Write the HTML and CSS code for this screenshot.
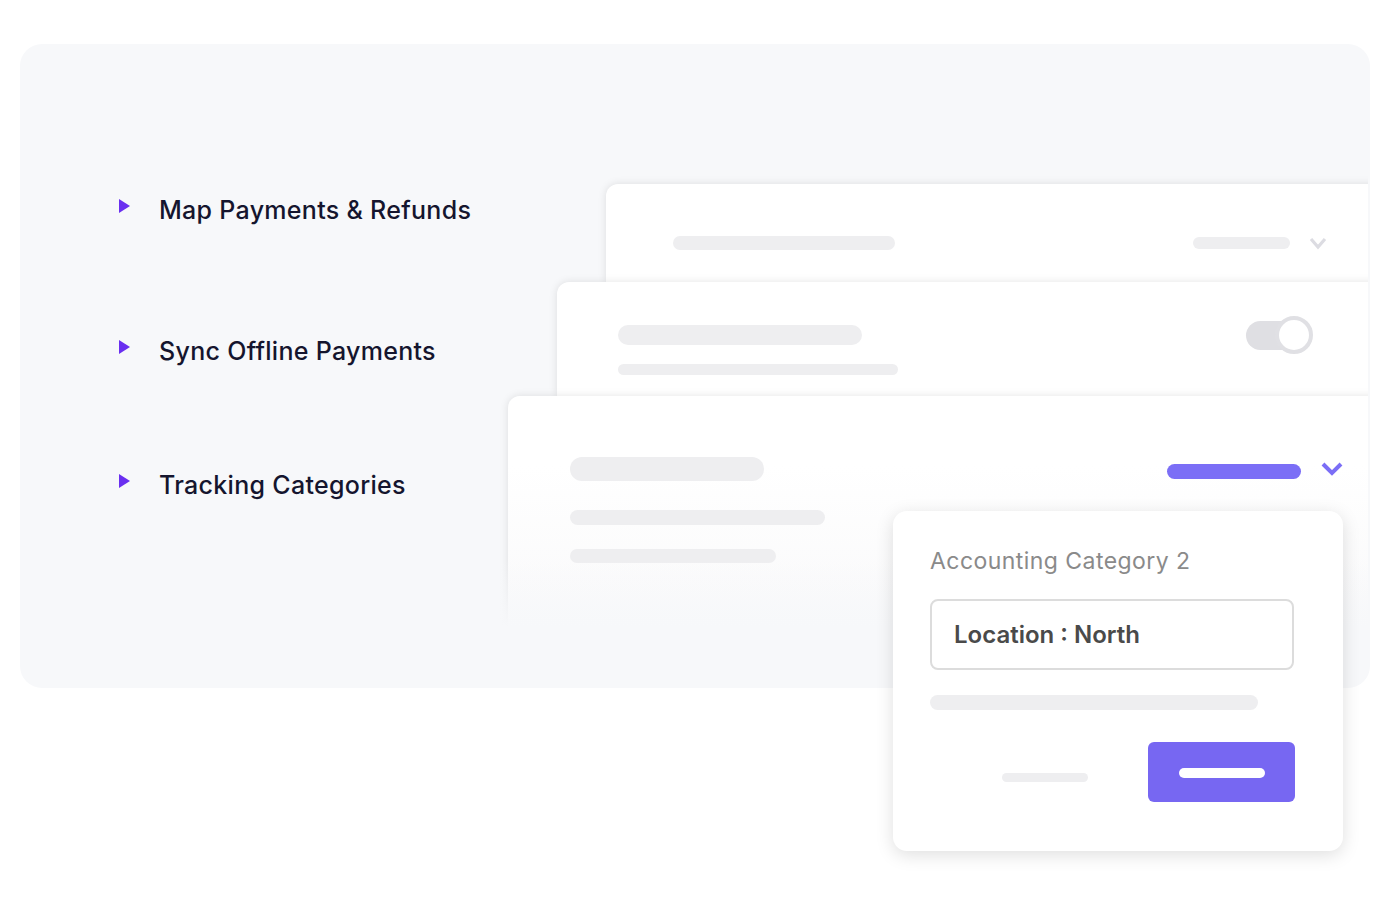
FILE: index.html
```html
<!DOCTYPE html>
<html lang="en">
<head>
  <meta charset="UTF-8">
  <meta name="viewport" content="width=device-width, initial-scale=1.0">
  <title>Accounting Sync</title>
  <link rel="stylesheet" href="styles.css">
</head>
<body>

<div class="page">
  <div class="panel">
    <ul class="features">
      <li class="feature feature-map"><span class="arrow"></span>Map Payments &amp; Refunds</li>
      <li class="feature feature-sync"><span class="arrow"></span>Sync Offline Payments</li>
      <li class="feature feature-track"><span class="arrow"></span>Tracking Categories</li>
    </ul>

    <div class="stack">
      <div class="stack-clip">
        <div class="card card-one">
          <div class="row">
            <span class="bar bar-a"></span>
            <div class="row-end">
              <span class="bar bar-b"></span>
              <svg class="chevron" width="18" height="14" viewBox="0 0 18 14">
                <polyline points="2,3 9,11 16,3" fill="none" stroke="#dcdce2" stroke-width="3.2"/>
              </svg>
            </div>
          </div>
        </div>

        <div class="card card-two">
          <div class="row row-top">
            <div class="lines">
              <span class="bar bar-c"></span>
              <span class="bar bar-d"></span>
            </div>
            <div class="toggle">
              <span class="track"></span>
              <span class="knob"></span>
            </div>
          </div>
        </div>

        <div class="card card-three">
          <div class="row">
            <span class="bar bar-e"></span>
            <div class="row-end">
              <span class="bar bar-purple"></span>
              <svg class="chevron" width="24" height="16" viewBox="0 0 24 16">
                <polyline points="3,3 12,12 21,3" fill="none" stroke="#7b6ef6" stroke-width="4"/>
              </svg>
            </div>
          </div>
          <span class="bar bar-f"></span>
          <span class="bar bar-g"></span>
        </div>
      </div>

      <div class="popup">
        <div class="popup-label">Accounting Category 2</div>
        <div class="popup-input">Location : North</div>
        <span class="bar bar-h"></span>
        <div class="popup-actions">
          <span class="bar bar-i"></span>
          <div class="popup-button"><span class="button-line"></span></div>
        </div>
      </div>
    </div>
  </div>
</div>

</body>
</html>
```

FILE: styles.css
```css
body {
  margin: 0;
  background-color: #fff;
  font-family: Inter, "Noto Sans", sans-serif;
}

.page {
  height: 904px;
  padding: 44px 0 0 20px;
  box-sizing: border-box;
}

.panel {
  display: flex;
  width: 1350px;
  height: 644px;
  background-color: #f7f8fa;
  border-radius: 22px;
}

/* left list */
.features {
  width: 468px;
  margin: 0;
  padding: 0 0 0 99px;
  box-sizing: border-box;
  list-style: none;
}

.feature {
  display: flex;
  align-items: center;
  height: 32px;
  font-size: 25px;
  font-weight: 500;
  color: #15152e;
  letter-spacing: 0.3px;
}

.feature-map { margin-top: 150px; }
.feature-sync { margin-top: 109px; }
.feature-track { margin-top: 102px; }

.arrow {
  width: 0;
  height: 0;
  margin-right: 29px;
  border-top: 7px solid transparent;
  border-bottom: 7px solid transparent;
  border-left: 11px solid #6a2ff0;
  position: relative;
  top: -4px;
}

/* right side stack */
.stack {
  position: relative;
  flex: 1;
  margin-right: 2px;
}

.stack-clip {
  height: 100%;
  padding: 140px 0 0 20px;
  box-sizing: border-box;
  overflow: hidden;
}

.card {
  margin-right: -20px;
  background-color: #fff;
  border-radius: 12px 0 0 0;
  box-shadow: 0 0 8px rgba(0, 0, 0, 0.11);
  box-sizing: border-box;
  position: relative;
}

.card-one {
  height: 98px;
  margin-left: 98px;
  padding: 52px 61px 0 67px;
}

.card-two {
  height: 114px;
  margin-left: 49px;
  padding: 43px 75px 0 61px;
}

.card-three {
  height: 232px;
  padding: 61px 44px 0 62px;
  background: linear-gradient(#fff 30%, #f9f9fa 100%);
}

/* fade the last card into the panel */
.card-three::after {
  content: "";
  position: absolute;
  left: -20px;
  right: 0;
  bottom: -12px;
  height: 80px;
  background: linear-gradient(rgba(247, 248, 250, 0), #f7f8fa 85%);
}

.row {
  display: flex;
  align-items: center;
  justify-content: space-between;
}

.row-top {
  align-items: flex-start;
}

.row-end {
  display: flex;
  align-items: center;
  gap: 19px;
}

.bar {
  display: block;
  background-color: #eeeef0;
  border-radius: 10px;
}

.bar-a { width: 222px; height: 14px; }
.bar-b { width: 97px; height: 12px; }
.bar-c { width: 244px; height: 20px; }
.bar-d { width: 280px; height: 11px; margin-top: 19px; }
.bar-e { width: 194px; height: 24px; border-radius: 12px; }
.bar-f { width: 255px; height: 15px; margin-top: 29px; }
.bar-g { width: 206px; height: 14px; margin-top: 24px; }
.bar-h { width: 328px; height: 15px; margin-top: 25px; }
.bar-i { width: 86px; height: 9px; }

.bar-purple {
  width: 134px;
  height: 15px;
  background-color: #7b6ef6;
  margin-top: 4px;
}

.chevron {
  display: block;
}

.toggle {
  display: flex;
  align-items: center;
  margin-top: -9px;
}

.track {
  width: 52px;
  height: 29px;
  border-radius: 15px;
  background-color: #dfdfe3;
}

.knob {
  width: 38px;
  height: 38px;
  margin-left: -23px;
  border: 4px solid #e0e0e4;
  border-radius: 50%;
  background-color: #fff;
  box-sizing: border-box;
}

/* popup */
.popup {
  position: absolute;
  left: 405px;
  top: 467px;
  width: 450px;
  height: 340px;
  padding: 35px 48px 0 37px;
  box-sizing: border-box;
  background-color: #fff;
  border-radius: 14px;
  box-shadow: 0 4px 18px rgba(0, 0, 0, 0.13);
  z-index: 2;
}

.popup-label {
  font-size: 23px;
  line-height: 30px;
  letter-spacing: 0.45px;
  color: #8a8a8a;
}

.popup-input {
  width: 364px;
  height: 71px;
  margin-top: 23px;
  padding-left: 22px;
  display: flex;
  align-items: center;
  border: 2px solid #dcdcdc;
  border-radius: 8px;
  box-sizing: border-box;
  font-size: 24px;
  font-weight: 600;
  color: #4a4a4a;
}

.popup-actions {
  display: flex;
  align-items: center;
  justify-content: flex-end;
  gap: 60px;
  margin-top: 32px;
}

.bar-i { margin-top: 10px; }

.popup-button {
  width: 147px;
  height: 60px;
  display: flex;
  align-items: center;
  justify-content: center;
  background-color: #7767f2;
  border-radius: 6px;
}

.button-line {
  width: 86px;
  height: 10px;
  margin-top: 2px;
  border-radius: 5px;
  background-color: #fff;
}
```
